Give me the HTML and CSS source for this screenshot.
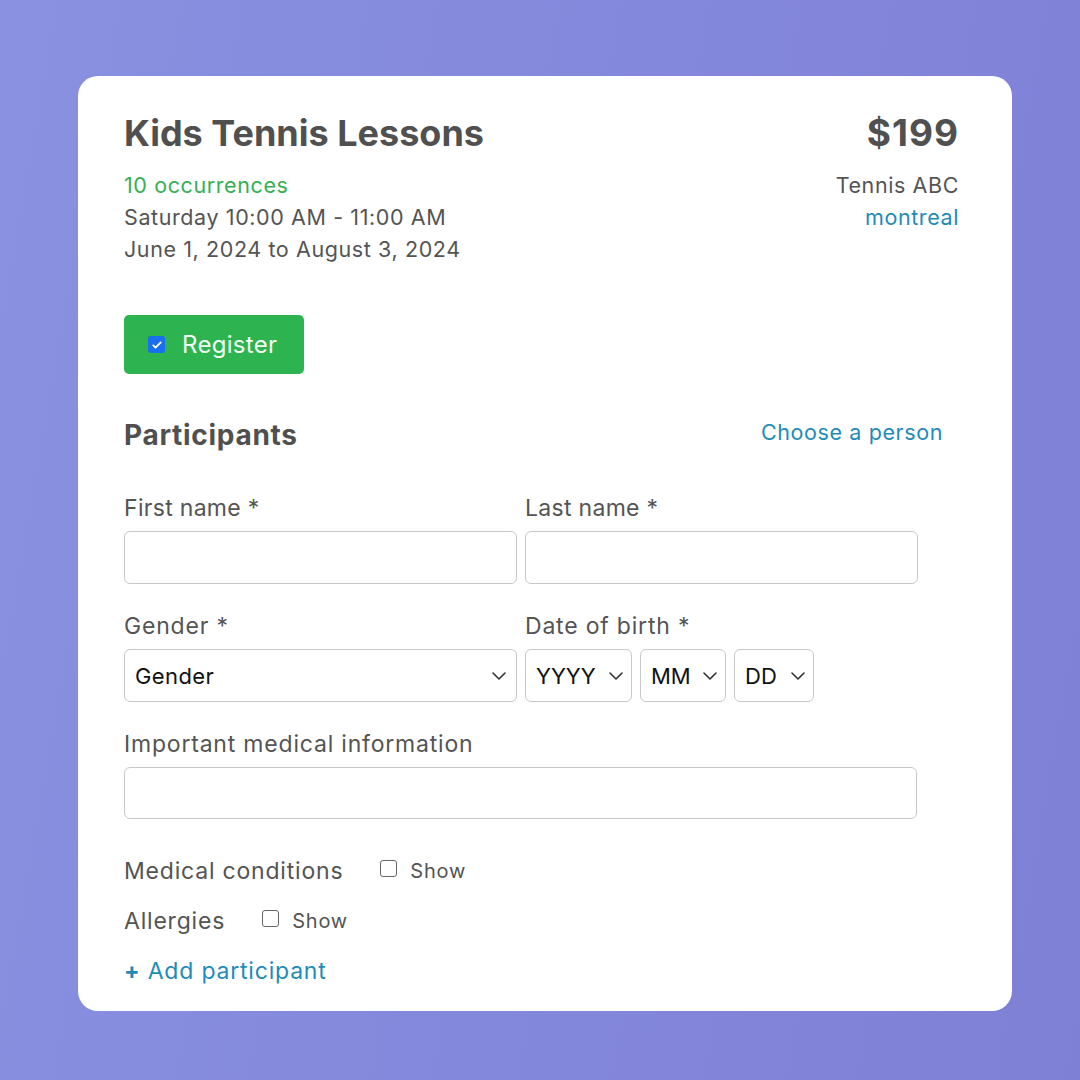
FILE: index.html
```html
<!DOCTYPE html>
<html lang="en">
<head>
<meta charset="utf-8">
<title>Kids Tennis Lessons</title>
<link rel="stylesheet" href="styles.css">
</head>
<body>
<div class="card">
  <div class="header">
    <div class="info">
      <h1 class="title">Kids Tennis Lessons</h1>
      <div class="green">10 occurrences</div>
      <div>Saturday 10:00 AM - 11:00 AM</div>
      <div>June 1, 2024 to August 3, 2024</div>
    </div>
    <div class="side">
      <div class="price">$199</div>
      <div>Tennis ABC</div>
      <div class="link">montreal</div>
    </div>
  </div>

  <button class="register" type="button">
    <span class="cb checked"><svg viewBox="0 0 16 16" width="12" height="12"><path d="M3 8.5l3 3 7-7" fill="none" stroke="#fff" stroke-width="2.4" stroke-linecap="round" stroke-linejoin="round"/></svg></span>
    <span>Register</span>
  </button>

  <div class="part-head">
    <h2 class="part-title">Participants</h2>
    <span class="link choose">Choose a person</span>
  </div>

  <div class="form">
    <div class="row">
      <div class="field">
        <div class="label">First name *</div>
        <div class="input"></div>
      </div>
      <div class="field">
        <div class="label">Last name *</div>
        <div class="input"></div>
      </div>
    </div>
    <div class="row gap-top">
      <div class="field">
        <div class="label">Gender *</div>
        <div class="input select"><span>Gender</span><svg class="chev" viewBox="0 0 14 8" width="14" height="8"><path d="M1 1l6 6 6-6" fill="none" stroke="#333" stroke-width="1.6" stroke-linecap="round" stroke-linejoin="round"/></svg></div>
      </div>
      <div class="field">
        <div class="label">Date of birth *</div>
        <div class="dob">
          <div class="input select sm yyyy"><span>YYYY</span><svg class="chev" viewBox="0 0 14 8" width="14" height="8"><path d="M1 1l6 6 6-6" fill="none" stroke="#333" stroke-width="1.6" stroke-linecap="round" stroke-linejoin="round"/></svg></div>
          <div class="input select sm mm"><span>MM</span><svg class="chev" viewBox="0 0 14 8" width="14" height="8"><path d="M1 1l6 6 6-6" fill="none" stroke="#333" stroke-width="1.6" stroke-linecap="round" stroke-linejoin="round"/></svg></div>
          <div class="input select sm dd"><span>DD</span><svg class="chev" viewBox="0 0 14 8" width="14" height="8"><path d="M1 1l6 6 6-6" fill="none" stroke="#333" stroke-width="1.6" stroke-linecap="round" stroke-linejoin="round"/></svg></div>
        </div>
      </div>
    </div>
    <div class="field gap-top">
      <div class="label">Important medical information</div>
      <div class="input wide"></div>
    </div>
    <div class="toggle first">
      <span class="tlabel">Medical conditions</span>
      <span class="cb"></span>
      <span class="show">Show</span>
    </div>
    <div class="toggle">
      <span class="tlabel">Allergies</span>
      <span class="cb"></span>
      <span class="show">Show</span>
    </div>
    <div class="link add"><span class="plus">+</span> Add participant</div>
  </div>
</div>
</body>
</html>
```

FILE: styles.css
```css
html, body {
  margin: 0;
  padding: 0;
}
body {
  width: 1080px;
  height: 1080px;
  box-sizing: border-box;
  padding: 76px 68px 69px 78px;
  background: linear-gradient(100deg, #8991e0 0%, #8488dc 50%, #7e80d6 100%);
  font-family: Inter, "Noto Sans", "Liberation Sans", sans-serif;
  color: #545454;
  font-size: 21.5px;
  letter-spacing: 0.6px;
  line-height: 32px;
}
.card {
  background: #fff;
  border-radius: 20px;
  height: 935px;
  box-sizing: border-box;
  padding: 35px 53px 0 46px;
}
.header {
  display: flex;
  justify-content: space-between;
}
.title {
  margin: 0 0 14px;
  font-size: 36px;
  line-height: 44px;
  font-weight: 700;
  color: #505050;
  letter-spacing: 0;
}
.green { color: #36b052; }
.link { color: #1f8bb8; }
.side {
  text-align: right;
}
.price {
  font-size: 37px;
  line-height: 44px;
  font-weight: 700;
  color: #505050;
  letter-spacing: 1px;
  margin-bottom: 14px;
}
.register {
  margin-top: 50px;
  display: flex;
  align-items: center;
  gap: 17px;
  width: 180px;
  height: 59px;
  padding: 0 0 0 24px;
  border: none;
  border-radius: 5px;
  background: #2db34f;
  color: #f2fff4;
  font-family: inherit;
  font-size: 24px;
  letter-spacing: 0.3px;
}
.cb {
  display: inline-flex;
  align-items: center;
  justify-content: center;
  width: 15px;
  height: 15px;
  border: 1.3px solid #666;
  border-radius: 3px;
  background: #fff;
  box-sizing: content-box;
}
.cb.checked {
  background: #1a6ff0;
  border-color: #1a6ff0;
  width: 17px;
  height: 17px;
  border: none;
}
.part-head {
  margin-top: 45px;
  display: flex;
  justify-content: space-between;
  align-items: center;
  padding-right: 16px;
}
.part-title {
  margin: 0;
  font-size: 28px;
  line-height: 32px;
  font-weight: 700;
  color: #505050;
  letter-spacing: 0.7px;
}
.choose { position: relative; top: -3px; }
.form {
  margin-top: 41px;
  width: 794px;
  font-size: 23px;
  letter-spacing: 0.8px;
}
.row {
  display: flex;
  gap: 8px;
}
.field { flex: 1; }
.gap-top { margin-top: 26px; }
.label {
  margin-bottom: 7px;
}
.row:first-child .label { letter-spacing: 0.3px; }
.input {
  height: 53px;
  box-sizing: border-box;
  border: 1px solid #c8c8c8;
  border-radius: 6px;
  background: #fff;
}
.input.wide { height: 52px; width: 793px; }
.select {
  display: flex;
  align-items: center;
  justify-content: space-between;
  padding: 0 10px 0 10px;
  color: #111;
  font-size: 22px;
  letter-spacing: 0.4px;
}
.chev { flex: none; }
.dob {
  display: flex;
  gap: 8px;
}
.sm { padding: 0 8px 0 10px; letter-spacing: 0; }
.yyyy { width: 107px; }
.mm { width: 86px; }
.dd { width: 80px; }
.toggle {
  display: flex;
  align-items: center;
  margin-top: 18px;
}
.toggle.first { margin-top: 36px; }
.tlabel { margin-right: 37px; }
.toggle .cb { margin-right: 13px; position: relative; top: -3px; }
.show { font-size: 20px; letter-spacing: 0.8px; }
.add { margin-top: 18px; }
.plus { font-weight: 700; }
```
